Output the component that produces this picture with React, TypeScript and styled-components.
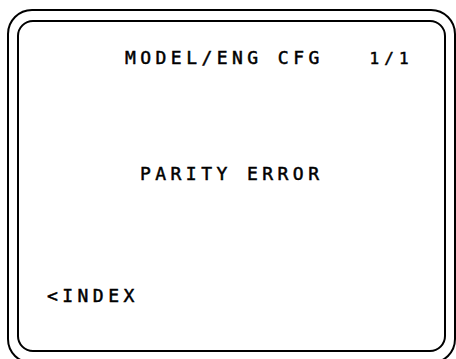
import styled, { createGlobalStyle } from "styled-components";

const GlobalStyle = createGlobalStyle`
   html, body {
      margin: 0;
      padding: 0;
      background: #fff;
      overflow: hidden;
   }
`;

export default function App() {
   return (
      <>
         <GlobalStyle />
         <Bezel>
            <Screen>
               <Line $indent={106}>
                  {"MODEL/ENG CFG   "}
                  <Small>1/1</Small>
               </Line>
               <Line $indent={121} $top={95}>
                  PARITY ERROR
               </Line>
               <Line $indent={28} $top={102}>
                  {"<INDEX"}
               </Line>
            </Screen>
         </Bezel>
      </>
   );
}

const Bezel = styled.div`
   box-sizing: border-box;
   margin: 9px 0 0 7px;
   width: 449px;
   height: 355px;
   border: 2px solid #000;
   border-radius: 25px;
   padding: 9px 8px 10px 8px;
`;

const Screen = styled.div`
   box-sizing: border-box;
   height: 100%;
   border: 2px solid #000;
   border-radius: 16px;
   padding-top: 26px;
   display: flex;
   flex-direction: column;
`;

const Line = styled.div<{ $indent: number; $top?: number }>`
   margin-top: ${(p) => p.$top ?? 0}px;
   padding-left: ${(p) => p.$indent}px;
   font-family: "DejaVu Sans Mono", "Liberation Mono", monospace;
   font-size: 18px;
   line-height: 20px;
   letter-spacing: 4.45px;
   -webkit-text-stroke: 0.5px #000;
   white-space: pre;
   color: #000;
`;

const Small = styled.span`
   font-size: 16px;
   letter-spacing: 5.1px;
`;
